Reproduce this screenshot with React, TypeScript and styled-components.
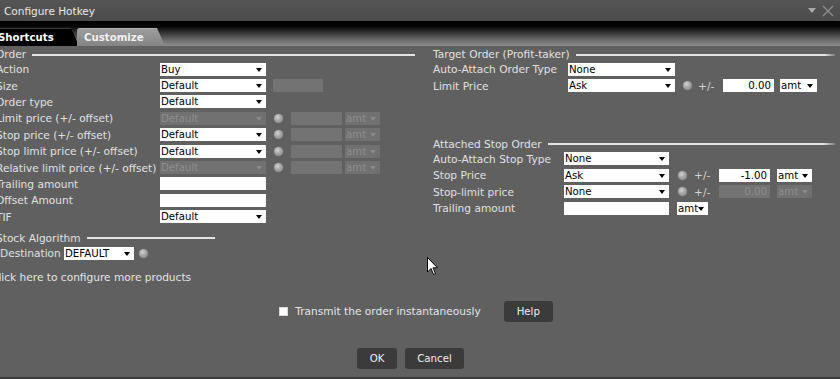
import React from "react";
import styled, { createGlobalStyle } from "styled-components";

const Global = createGlobalStyle`
  html, body { margin: 0; padding: 0; background: #606060; }
  body { font-family: "DejaVu Sans", Verdana, sans-serif; font-size: 10.6px; }
  * { box-sizing: border-box; }
`;

const Window = styled.div`
  position: relative;
  width: 840px;
  height: 379px;
  overflow: hidden;
  display: flex;
  flex-direction: column;
  background: #606060;
  color: #e0e0e0;
`;

const TitleBar = styled.div`
  height: 21px;
  flex: none;
  display: flex;
  align-items: center;
  padding: 0 6px 0 4px;
  background: linear-gradient(#555555, #4b4b4b);
  color: #e8e8e8;
  font-size: 10.5px;
`;

const TitleText = styled.span`
  flex: 1;
`;

const TitleControls = styled.div`
  display: flex;
  align-items: center;
  gap: 6px;
`;

const TabStrip = styled.div`
  height: 25px;
  flex: none;
  display: flex;
  align-items: flex-end;
  background: linear-gradient(#000000 0%, #070707 22%, #3a3a3a 50%, #6e6e6e 78%, #8e8e8e 100%);
`;

const Tab = styled.div<{ $active?: boolean }>`
  height: 18px;
  display: flex;
  align-items: center;
  font-weight: bold;
  font-size: 10.2px;
  color: ${(p) => (p.$active ? "#f0f0f0" : "#ffffff")};
  background: ${(p) =>
    p.$active ? "linear-gradient(#9c9c9c, #848484)" : "#000000"};
  clip-path: polygon(0 0, calc(100% - 8px) 0, 100% 100%, 0 100%);
  border-top: 1px solid ${(p) => (p.$active ? "#b0b0b0" : "#3a3a3a")};
`;

const ShortcutsTab = styled(Tab)`
  width: 82px;
  margin-left: -3px;
  padding-left: 1px;
`;

const CustomizeTab = styled(Tab)`
  width: 88px;
  margin-left: -2px;
  padding-left: 7px;
  border-radius: 3px 0 0 0;
`;

const Panel = styled.div`
  flex: 1;
  display: flex;
  flex-direction: column;
`;

const Columns = styled.div`
  height: 254px;
  flex: none;
  display: flex;
  margin-left: -4px;
`;

const LeftCol = styled.div`
  width: 419px;
  display: flex;
  flex-direction: column;
  padding-top: 1px;
`;

const RightCol = styled.div`
  width: 402px;
  margin-left: 18px;
  display: flex;
  flex-direction: column;
  padding-top: 1px;
`;

const Legend = styled.div<{ $mt?: number }>`
  height: 14px;
  display: flex;
  align-items: center;
  margin-top: ${(p) => p.$mt ?? 0}px;
  color: #e0e0e0;
  white-space: nowrap;
`;

const LegendLine = styled.div<{ $w?: number; $fade?: boolean }>`
  height: 2px;
  margin-left: 6px;
  margin-top: 1px;
  ${(p) => (p.$w ? `width: ${p.$w}px;` : "flex: 1;")}
  background: ${(p) =>
    p.$fade
      ? "linear-gradient(to right, #e4e4e4 0%, #e4e4e4 96%, rgba(228,228,228,0.2) 100%)"
      : "#e4e4e4"};
`;

const Row = styled.div<{ $indent?: number }>`
  height: 16.4px;
  display: flex;
  align-items: center;
  margin-left: ${(p) => p.$indent ?? 0}px;
`;

const Label = styled.div<{ $w: number }>`
  width: ${(p) => p.$w}px;
  flex: none;
  white-space: nowrap;
  color: #e0e0e0;
`;

const SelectBox = styled.div<{ $w: number; $disabled?: boolean; $ml?: number }>`
  width: ${(p) => p.$w}px;
  height: 13px;
  flex: none;
  margin-left: ${(p) => p.$ml ?? 0}px;
  display: flex;
  align-items: center;
  justify-content: space-between;
  padding: 0 4px 0 1px;
  background: ${(p) => (p.$disabled ? "#717171" : "#ffffff")};
  color: ${(p) => (p.$disabled ? "#8e8e8e" : "#000000")};
  font-size: 10.2px;
  line-height: 13px;
`;

const Arrow = styled.span<{ $disabled?: boolean }>`
  width: 0;
  height: 0;
  border-left: 3.5px solid transparent;
  border-right: 3.5px solid transparent;
  border-top: 4px solid ${(p) => (p.$disabled ? "#8a8a8a" : "#000000")};
  margin-top: 1px;
`;

const InputBox = styled.div<{ $w: number; $disabled?: boolean; $ml?: number }>`
  width: ${(p) => p.$w}px;
  height: 13px;
  flex: none;
  margin-left: ${(p) => p.$ml ?? 0}px;
  padding-right: 3px;
  text-align: right;
  line-height: 13px;
  font-size: 10.2px;
  background: ${(p) => (p.$disabled ? "#737373" : "#ffffff")};
  color: ${(p) => (p.$disabled ? "#8e8e8e" : "#000000")};
`;

const Dot = styled.span<{ $ml?: number }>`
  width: 9px;
  height: 9px;
  flex: none;
  margin-left: ${(p) => p.$ml ?? 0}px;
  border-radius: 50%;
  background: radial-gradient(circle at 40% 35%, #d2d2d2 0%, #a4a4a4 45%, #848484 100%);
  box-shadow: 0 0 0 0.5px #6c6c6c;
`;

const PlusMinus = styled.span<{ $ml: number }>`
  margin-left: ${(p) => p.$ml}px;
  color: #d4d4d4;
  width: 21px;
  flex: none;
`;

const Spacer = styled.div<{ $h: number }>`
  height: ${(p) => p.$h}px;
  flex: none;
`;

const LinkText = styled.div`
  margin-left: -5px;
  margin-top: 8px;
  height: 16px;
  line-height: 16px;
  color: #e4e4e4;
  white-space: nowrap;
`;

const TransmitRow = styled.div`
  height: 22px;
  display: flex;
  align-items: center;
  justify-content: center;
  padding-right: 8px;
`;

const CheckBox = styled.span`
  width: 9px;
  height: 9px;
  flex: none;
  background: #ffffff;
  border: 1px solid #d8d8d8;
  margin-right: 7px;
`;

const CheckLabel = styled.span`
  color: #e4e4e4;
  margin-right: 23px;
  white-space: nowrap;
`;

const Button = styled.div<{ $w: number }>`
  width: ${(p) => p.$w}px;
  height: 21px;
  flex: none;
  display: flex;
  align-items: center;
  justify-content: center;
  background: #3b3b3b;
  border-radius: 3px;
  color: #eeeeee;
  font-size: 10.2px;
`;

const ButtonRow = styled.div`
  margin-top: 26px;
  display: flex;
  justify-content: center;
  gap: 8px;
  padding-right: 19px;
`;

const BottomEdge = styled.div`
  margin-top: auto;
  height: 2px;
  background: #3c3c3c;
  flex: none;
`;

const Cursor = styled.svg`
  position: absolute;
  left: 427px;
  top: 257px;
`;

type SelProps = { w: number; value: string; disabled?: boolean; ml?: number };
const Select = ({ w, value, disabled, ml }: SelProps) => (
  <SelectBox $w={w} $disabled={disabled} $ml={ml}>
    <span>{value}</span>
    <Arrow $disabled={disabled} />
  </SelectBox>
);

const leftRows: { label: string; value?: string; disabled?: boolean; kind?: string }[] = [
  { label: "Action", value: "Buy" },
  { label: "Size", value: "Default", kind: "size" },
  { label: "Order type", value: "Default" },
  { label: "Limit price (+/- offset)", value: "Default", disabled: true, kind: "price" },
  { label: "Stop price (+/- offset)", value: "Default", kind: "price" },
  { label: "Stop limit price (+/- offset)", value: "Default", kind: "price" },
  { label: "Relative limit price (+/- offset)", value: "Default", disabled: true, kind: "price" },
  { label: "Trailing amount", kind: "input" },
  { label: "Offset Amount", kind: "input" },
  { label: "TIF", value: "Default" },
];

export default function App() {
  return (
    <>
      <Global />
      <Window>
        <TitleBar>
          <TitleText>Configure Hotkey</TitleText>
          <TitleControls>
            <svg width="8" height="6" viewBox="0 0 8 6">
              <path d="M0 0 L8 0 L4 5 Z" fill="#a8a8a8" />
            </svg>
            <svg width="12" height="12" viewBox="0 0 12 12">
              <path d="M1 1 L11 11 M11 1 L1 11" stroke="#8e8e8e" strokeWidth="1.3" />
            </svg>
          </TitleControls>
        </TitleBar>
        <TabStrip>
          <ShortcutsTab>Shortcuts</ShortcutsTab>
          <CustomizeTab $active>Customize</CustomizeTab>
        </TabStrip>
        <Panel>
          <Columns>
            <LeftCol>
              <Legend>
                <span>Order</span>
                <LegendLine />
              </Legend>
              {leftRows.map((r) => (
                <Row key={r.label}>
                  <Label $w={164}>{r.label}</Label>
                  {r.kind === "input" ? (
                    <InputBox $w={106} />
                  ) : (
                    <Select w={106} value={r.value || ""} disabled={r.disabled} />
                  )}
                  {r.kind === "size" && <InputBox $w={50} $ml={7} $disabled />}
                  {r.kind === "price" && (
                    <>
                      <Dot $ml={8} />
                      <InputBox $w={51} $ml={8} $disabled />
                      <Select w={35} ml={3} value="amt" disabled />
                    </>
                  )}
                </Row>
              ))}
              <Legend $mt={6}>
                <span>Stock Algorithm</span>
                <LegendLine $w={128} />
              </Legend>
              <Row $indent={4}>
                <Label $w={64}>Destination</Label>
                <Select w={70} value="DEFAULT" />
                <Dot $ml={5} />
              </Row>
              <LinkText>Click here to configure more products</LinkText>
            </LeftCol>
            <RightCol>
              <Legend>
                <span>Target Order (Profit-taker)</span>
                <LegendLine $fade />
              </Legend>
              <Row>
                <Label $w={135}>Auto-Attach Order Type</Label>
                <Select w={107} value="None" />
              </Row>
              <Row>
                <Label $w={135}>Limit Price</Label>
                <Select w={107} value="Ask" />
                <Dot $ml={8} />
                <PlusMinus $ml={6}>+/-</PlusMinus>
                <InputBox $w={51} $ml={4}>0.00</InputBox>
                <Select w={37} ml={6} value="amt" />
              </Row>
              <Spacer $h={43} />
              <Legend>
                <span>Attached Stop Order</span>
                <LegendLine $fade />
              </Legend>
              <Row>
                <Label $w={131}>Auto-Attach Stop Type</Label>
                <Select w={105} value="None" />
              </Row>
              <Row>
                <Label $w={131}>Stop Price</Label>
                <Select w={105} value="Ask" />
                <Dot $ml={9} />
                <PlusMinus $ml={7}>+/-</PlusMinus>
                <InputBox $w={51} $ml={4}>-1.00</InputBox>
                <Select w={35} ml={7} value="amt" />
              </Row>
              <Row>
                <Label $w={131}>Stop-limit price</Label>
                <Select w={105} value="None" />
                <Dot $ml={9} />
                <PlusMinus $ml={7}>+/-</PlusMinus>
                <InputBox $w={51} $ml={4} $disabled>0.00</InputBox>
                <Select w={35} ml={7} value="amt" disabled />
              </Row>
              <Row>
                <Label $w={131}>Trailing amount</Label>
                <InputBox $w={105} />
                <Select w={31} ml={8} value="amt" />
              </Row>
            </RightCol>
          </Columns>
          <TransmitRow>
            <CheckBox />
            <CheckLabel>Transmit the order instantaneously</CheckLabel>
            <Button $w={49}>Help</Button>
          </TransmitRow>
          <ButtonRow>
            <Button $w={40}>OK</Button>
            <Button $w={59}>Cancel</Button>
          </ButtonRow>
          <BottomEdge />
        </Panel>
        <Cursor width="12" height="19" viewBox="0 0 12 19">
          <path d="M0.5 0.5 L0.5 15 L4 11.5 L6.5 17.5 L8.5 16.7 L6 10.8 L10.5 10.8 Z" fill="#ffffff" stroke="#000000" strokeWidth="1" />
        </Cursor>
      </Window>
    </>
  );
}
